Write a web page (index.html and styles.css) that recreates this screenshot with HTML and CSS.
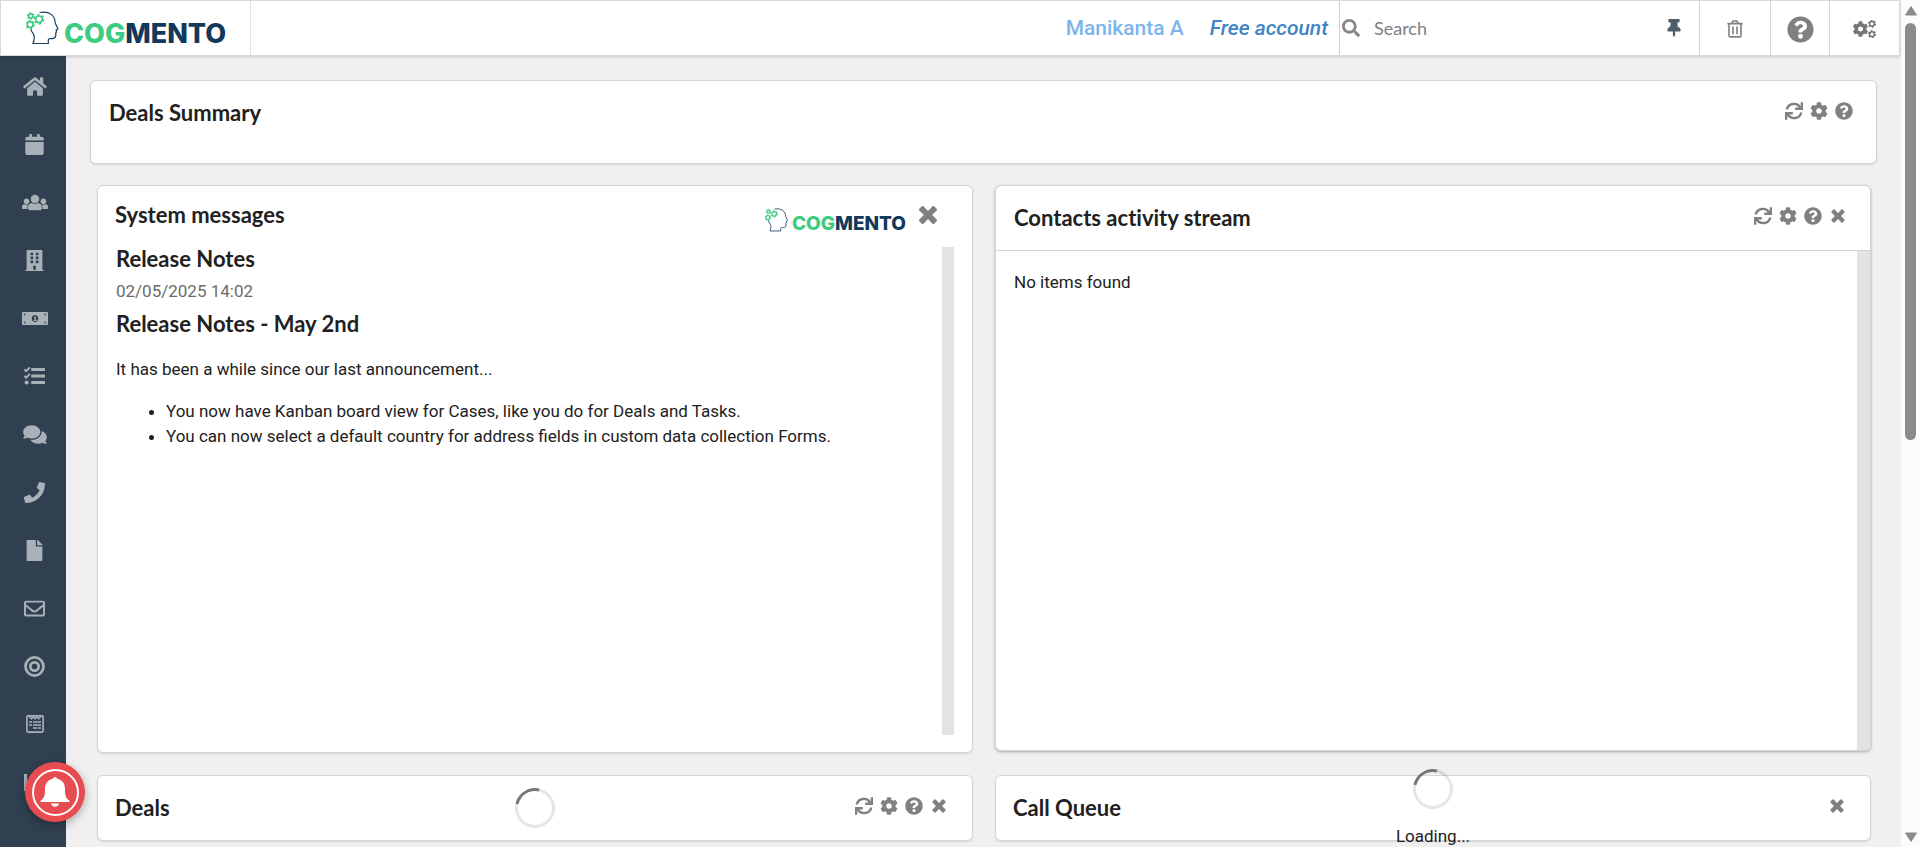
FILE: index.html
```html
<!DOCTYPE html>
<html lang="en">
<head>
<meta charset="utf-8">
<title>Cogmento CRM</title>
<link rel="stylesheet" href="styles.css">
</head>
<body>
<svg class="sprite" aria-hidden="true">
  <symbol id="home" viewBox="0 0 576 512"><path d="M280.37 148.26L96 300.11V464a16 16 0 0 0 16 16l112.06-.29a16 16 0 0 0 15.92-16V368a16 16 0 0 1 16-16h64a16 16 0 0 1 16 16v95.64a16 16 0 0 0 16 16.05L464 480a16 16 0 0 0 16-16V300L295.67 148.26a12.19 12.19 0 0 0-15.3 0zM571.6 251.47L488 182.56V44.05a12 12 0 0 0-12-12h-56a12 12 0 0 0-12 12v72.61L318.47 43a48 48 0 0 0-61 0L4.34 251.47a12 12 0 0 0-1.6 16.9l25.5 31A12 12 0 0 0 45.15 301l235.22-193.74a12.19 12.19 0 0 1 15.3 0L530.9 301a12 12 0 0 0 16.9-1.6l25.5-31a12 12 0 0 0-1.7-16.93z"/></symbol>
  <symbol id="calendar" viewBox="0 0 448 512"><path d="M12 192h424c6.600 0 12 5.400 12 12v260c0 26.500-21.500 48-48 48H48c-26.500 0-48-21.500-48-48V204c0-6.600 5.400-12 12-12zm436-44v-36c0-26.500-21.500-48-48-48h-48V12c0-6.600-5.400-12-12-12h-40c-6.600 0-12 5.400-12 12v52H160V12c0-6.600-5.400-12-12-12h-40c-6.600 0-12 5.400-12 12v52H48C21.500 64 0 85.500 0 112v36c0 6.600 5.400 12 12 12h424c6.600 0 12-5.400 12-12z"/></symbol>
  <symbol id="users" viewBox="0 0 640 512"><path d="M320 64c57.99 0 105 47.01 105 105s-47.01 105-105 105-105-47.01-105-105S262.01 64 320 64zm113.463 217.366l-39.982-9.996c-49.168 35.365-108.766 27.473-146.961 0l-39.982 9.996C174.485 289.379 152 318.177 152 351.216V412c0 19.882 16.118 36 36 36h264c19.882 0 36-16.118 36-36v-60.784c0-33.039-22.485-61.837-54.537-69.85zM528 300c38.66 0 70-31.34 70-70s-31.34-70-70-70-70 31.34-70 70 31.34 70 70 70zm-416 0c38.66 0 70-31.34 70-70s-31.34-70-70-70-70 31.34-70 70 31.34 70 70 70zm24 112v-60.784c0-16.551 4.593-32.204 12.703-45.599-29.988 14.72-63.336 8.708-85.69-7.37l-26.655 6.664C14.99 310.252 0 329.452 0 351.477V392c0 13.255 10.745 24 24 24h112.169a52.417 52.417 0 0 1-.169-4zm467.642-107.09l-26.655-6.664c-27.925 20.086-60.89 19.233-85.786 7.218C499.369 318.893 504 334.601 504 351.216V412c0 1.347-.068 2.678-.169 4H616c13.255 0 24-10.745 24-24v-40.523c0-22.025-14.99-41.225-36.358-46.567z"/></symbol>
  <symbol id="building" viewBox="0 0 448 512"><path fill-rule="evenodd" d="M436 480h-20V24c0-13.255-10.745-24-24-24H56C42.745 0 32 10.745 32 24v456H12c-6.627 0-12 5.373-12 12v20h448v-20c0-6.627-5.373-12-12-12zM128 64h64v64h-64zM256 64h64v64h-64zM128 160h64v64h-64zM256 160h64v64h-64zM128 256h64v64h-64zM256 256h64v64h-64zM192 384h64v96h-64z"/></symbol>
  <symbol id="money" viewBox="0 0 640 512"><path fill-rule="evenodd" d="M24 96h592a24 24 0 0 1 24 24v272a24 24 0 0 1-24 24H24a24 24 0 0 1-24-24V120a24 24 0 0 1 24-24zM48 140v44a44 44 0 0 0 44-44zM592 140h-44a44 44 0 0 0 44 44zM48 372h44a44 44 0 0 0-44-44zM592 372v-44a44 44 0 0 0-44 44zM320 172c-46 0-80 38-80 84s34 84 80 84 80-38 80-84-34-84-80-84zM296 206h44v88h20v22h-70v-22h18v-60h-16z"/></symbol>
  <symbol id="tasks" viewBox="0 0 512 512"><path d="M190 50h308a14 14 0 0 1 14 14v46a14 14 0 0 1-14 14H190a14 14 0 0 1-14-14V64a14 14 0 0 1 14-14zM190 208h308a14 14 0 0 1 14 14v44a14 14 0 0 1-14 14H190a14 14 0 0 1-14-14v-44a14 14 0 0 1 14-14zM190 366h308a14 14 0 0 1 14 14v44a14 14 0 0 1-14 14H190a14 14 0 0 1-14-14v-44a14 14 0 0 1 14-14z"/><circle cx="64" cy="402" r="50"/><path d="M8 82l46 44L142 34M8 240l46 44L142 192" fill="none" stroke="currentColor" stroke-width="48"/></symbol>
  <symbol id="comments" viewBox="0 0 576 512"><path d="M416 192c0-88.400-93.100-160-208-160S0 103.600 0 192c0 34.300 14.100 65.900 38 92-13.400 30.200-35.500 54.200-35.800 54.500-2.200 2.300-2.800 5.700-1.500 8.700S4.800 352 8 352c36.600 0 66.900-12.300 88.700-25 32.200 15.700 70.300 25 111.300 25 114.900 0 208-71.600 208-160zm122 220c23.900-26 38-57.700 38-92 0-66.900-53.500-124.200-129.300-148.100.9 6.600 1.300 13.300 1.300 20.100 0 105.900-107.700 192-240 192-10.800 0-21.300-.8-31.700-1.900C207.800 439.600 281.800 480 368 480c41 0 79.100-9.200 111.300-25 21.800 12.700 52.100 25 88.700 25 3.200 0 6.100-1.900 7.300-4.800 1.300-2.900.7-6.300-1.500-8.700-.3-.3-22.400-24.200-35.800-54.500z"/></symbol>
  <symbol id="phone" viewBox="0 0 512 512"><path d="M493.400 24.600l-104-24c-11.300-2.600-22.900 3.300-27.500 13.900l-48 112c-4.200 9.800-1.400 21.300 6.900 28l60.600 49.600c-36 76.700-98.900 140.500-177.200 177.200l-49.600-60.600c-6.800-8.300-18.200-11.100-28-6.900l-112 48C3.900 366.500-2 378.100.6 389.400l24 104C27.100 504.200 36.700 512 48 512c256.100 0 464-207.500 464-464 0-11.200-7.700-20.900-18.600-23.400z"/></symbol>
  <symbol id="file" viewBox="0 0 384 512"><path d="M224 136V0H24C10.700 0 0 10.700 0 24v464c0 13.300 10.700 24 24 24h336c13.300 0 24-10.700 24-24V160H248c-13.200 0-24-10.800-24-24zm160-14.100v6.100H256V0h6.100c6.400 0 12.500 2.500 17 7l97.900 98c4.500 4.500 7 10.600 7 16.900z"/></symbol>
  <symbol id="mail" viewBox="0 0 512 512"><path d="M464 64H48C21.490 64 0 85.490 0 112v288c0 26.510 21.490 48 48 48h416c26.510 0 48-21.490 48-48V112c0-26.510-21.490-48-48-48zm0 48v40.805c-22.422 18.259-58.168 46.651-134.587 106.490-16.841 13.247-50.201 45.072-73.413 44.701-23.208.375-56.579-31.459-73.413-44.701C106.180 199.465 70.425 171.067 48 152.805V112h416zM48 400V214.398c22.914 18.251 55.409 43.862 104.938 82.646 21.857 17.205 60.134 55.186 103.062 54.955 42.717.231 80.509-37.199 103.053-54.947 49.528-38.783 82.032-64.401 104.947-82.653V400H48z"/></symbol>
  <symbol id="target" viewBox="0 0 20 20"><g fill="none" stroke="currentColor"><circle cx="10" cy="10" r="8.600" stroke-width="2.600"/><circle cx="10" cy="10" r="4" stroke-width="2.600"/></g></symbol>
  <symbol id="form" viewBox="0 0 18 18"><g fill="none" stroke="currentColor"><rect x=".9" y=".9" width="16.200" height="16.200" rx="1" stroke-width="1.600"/><path d="M3 1.500l2.400 2.300L7.200 2 9 3.800 10.800 2l1.800 1.800L15 1.500" stroke-width="1.400"/><path d="M3 7h3M7 7h8M3 10h3M7 10h8M7 13h4M12 13h3" stroke-width="1.700"/></g></symbol>
  <symbol id="chart" viewBox="0 0 20 16"><path d="M0 0h3v13h17v3H0zM6 7h3v4H6zM10 3h3v8h-3zM14 5h3v6h-3z"/></symbol>
  <symbol id="search" viewBox="0 0 512 512"><path d="M505 442.700L405.300 343c-4.500-4.500-10.600-7-17-7H372c27.600-35.300 44-79.700 44-128C416 93.100 322.900 0 208 0S0 93.100 0 208s93.100 208 208 208c48.300 0 92.700-16.400 128-44v16.300c0 6.400 2.500 12.500 7 17l99.700 99.700c9.400 9.400 24.600 9.400 33.900 0l28.300-28.300c9.400-9.400 9.400-24.600.1-34zM208 336c-70.700 0-128-57.200-128-128 0-70.700 57.200-128 128-128 70.700 0 128 57.200 128 128 0 70.700-57.200 128-128 128z"/></symbol>
  <symbol id="pin" viewBox="0 0 384 512"><path d="M298.028 214.267L285.793 96H328c13.255 0 24-10.745 24-24V24c0-13.255-10.745-24-24-24H56C42.745 0 32 10.745 32 24v48c0 13.255 10.745 24 24 24h42.207L85.972 214.267C37.465 236.820 0 277.261 0 328c0 13.255 10.745 24 24 24h136v104.007c0 1.242.289 2.467.845 3.578l24 48c2.941 5.882 11.364 5.893 14.311 0l24-48a8.008 8.008 0 0 0 .845-3.578V352h136c13.255 0 24-10.745 24-24-.001-51.183-37.983-91.420-85.973-113.733z"/></symbol>
  <symbol id="trash" viewBox="0 0 16 18"><path d="M.4 3.600h15.200M4.800 3.400L6 1h4l1.200 2.400M2 4v11.700a1.200 1.200 0 0 0 1.200 1.200h9.600a1.200 1.200 0 0 0 1.200-1.200V4M6 6.500v7.700M10 6.500v7.700" fill="none" stroke="currentColor" stroke-width="1.600"/></symbol>
  <symbol id="help" viewBox="0 0 512 512"><path d="M504 256c0 136.997-111.043 248-248 248S8 392.997 8 256C8 119.083 119.043 8 256 8s248 111.083 248 248zM262.655 90c-54.497 0-89.255 22.957-116.549 63.758-3.536 5.286-2.353 12.415 2.715 16.258l34.699 26.310c5.205 3.947 12.621 3.008 16.665-2.122 17.864-22.658 30.113-35.797 57.303-35.797 20.429 0 45.698 13.148 45.698 32.958 0 14.976-12.363 22.667-32.534 33.976C247.128 238.528 216 254.941 216 296v4c0 6.627 5.373 12 12 12h56c6.627 0 12-5.373 12-12v-1.333c0-28.462 83.186-29.647 83.186-106.667 0-58.002-60.165-102-116.531-102zM256 338c-25.365 0-46 20.635-46 46 0 25.364 20.635 46 46 46s46-20.636 46-46c0-25.365-20.635-46-46-46z"/></symbol>
  <symbol id="cog" viewBox="0 0 512 512"><path d="M487.400 315.700l-42.600-24.600c4.300-23.200 4.300-47 0-70.200l42.600-24.600c4.900-2.800 7.100-8.600 5.500-14-11.100-35.600-30-67.800-54.700-94.600-3.800-4.100-10-5.100-14.800-2.300L380.800 110c-17.900-15.400-38.500-27.300-60.800-35.100V25.800c0-5.600-3.900-10.500-9.400-11.700-36.700-8.200-74.300-7.800-109.200 0-5.500 1.200-9.400 6.100-9.400 11.700V75c-22.200 7.900-42.800 19.800-60.800 35.100L88.700 85.500c-4.900-2.800-11-1.900-14.800 2.300-24.700 26.700-43.600 58.900-54.700 94.600-1.700 5.400.6 11.200 5.500 14L67.300 221c-4.300 23.200-4.300 47 0 70.200l-42.600 24.600c-4.900 2.800-7.100 8.600-5.500 14 11.100 35.600 30 67.800 54.700 94.600 3.800 4.100 10 5.100 14.800 2.300l42.600-24.600c17.900 15.400 38.500 27.300 60.800 35.100v49.200c0 5.600 3.900 10.500 9.400 11.700 36.700 8.200 74.300 7.800 109.200 0 5.500-1.200 9.400-6.100 9.400-11.700v-49.200c22.200-7.900 42.800-19.800 60.800-35.100l42.600 24.600c4.900 2.800 11 1.900 14.800-2.300 24.700-26.700 43.600-58.900 54.700-94.600 1.500-5.500-.7-11.300-5.600-14.100zM256 336c-44.100 0-80-35.900-80-80s35.900-80 80-80 80 35.900 80 80-35.900 80-80 80z"/></symbol>
  <symbol id="cogs" viewBox="0 0 23 18"><use href="#cog" x="-.5" y="1" width="16" height="16"/><g fill="none" stroke="currentColor"><circle cx="19" cy="3.800" r="2.400" stroke-width="1.500"/><circle cx="19" cy="3.800" r="3.500" stroke-width="1.200" stroke-dasharray="1.800 1.870"/><circle cx="19" cy="14.200" r="2.400" stroke-width="1.500"/><circle cx="19" cy="14.200" r="3.500" stroke-width="1.200" stroke-dasharray="1.800 1.870"/></g></symbol>
  <symbol id="sync" viewBox="0 0 18 18"><path d="M1.700 7.600A7.400 7.400 0 0 1 15.200 5.400M16.300 10.400A7.400 7.400 0 0 1 2.800 12.600" fill="none" stroke="currentColor" stroke-width="2.400"/><path d="M15.700.2H18v7.800h-7.800V5.600h3.200l2.300-1.200zM2.300 17.800H0V10h7.800v2.400H4.600l-2.300 1.200z"/></symbol>
  <symbol id="times" viewBox="0 0 384 512"><path d="M323.100 441l53.900-53.900c9.400-9.400 9.400-24.500 0-33.900L279.800 256l97.200-97.200c9.400-9.400 9.400-24.500 0-33.900L323.100 71c-9.400-9.400-24.500-9.400-33.900 0L192 168.200 94.800 71c-9.400-9.400-24.500-9.400-33.900 0L7 124.900c-9.400 9.400-9.400 24.500 0 33.900l97.200 97.200L7 353.200c-9.400 9.400-9.400 24.500 0 33.900L60.900 441c9.400 9.400 24.500 9.400 33.900 0l97.200-97.200 97.200 97.200c9.300 9.300 24.500 9.300 33.900 0z"/></symbol>
  <symbol id="head" viewBox="0 0 34 34"><path d="M13.500 1.500C24 0 29 4.500 29.200 12l2.500 5.300c.3.800-.2 1.300-1.500 1.600l.3 2.200-.9 1 .3 1.300c-.2 3.500-1.500 4.200-4 4.200-2 0-3.600-.3-3.600 1.300V32.500H7c2-5 1.700-7 .5-9.500C5 20 4.800 19 4.800 17.500" fill="none" stroke="#1c3f5f" stroke-width="1.200"/><g fill="none" stroke="#3fcb80"><g stroke-width="1.700"><circle cx="4.700" cy="5" r="2.100"/><circle cx="13" cy="8.300" r="3.300"/><circle cx="4.100" cy="13.600" r="2.900"/></g><circle cx="4.700" cy="5" r="3.300" stroke-width="1.200" stroke-dasharray="1.700 1.760"/><circle cx="13" cy="8.300" r="4.700" stroke-width="1.400" stroke-dasharray="2.400 2.520"/><circle cx="4.100" cy="13.600" r="4.100" stroke-width="1.200" stroke-dasharray="2.100 2.190"/></g></symbol>
  <symbol id="bell" viewBox="0 0 30 30"><path d="M15 0a2 2 0 0 1 2 1.800c5.300 1 8 4.800 8 10.200 0 6.500.8 9 4 11.300.8.700.7 1.700-.2 1.700H1.200c-.9 0-1-1-.2-1.700C4.200 21 5 18.500 5 12 5 6.600 7.700 2.800 13 1.800A2 2 0 0 1 15 0zM11 26.600h8c-.3 2-1.800 3.200-4 3.200s-3.700-1.200-4-3.200z"/></symbol>
</svg>

<div class="window">
  <div class="app">
    <header class="topbar">
      <a class="brand" href="#" aria-label="Cogmento home">
        <svg class="brand-mark"><use href="#head"/></svg>
        <span class="brand-name"><span class="brand-cog">COG</span>MENTO</span>
      </a>
      <div class="account">
        <span class="user-name">Manikanta A</span>
        <a class="plan" href="#">Free account</a>
      </div>
      <form class="search">
        <svg class="search-icon"><use href="#search"/></svg>
        <input class="search-input" type="text" placeholder="Search" aria-label="Search">
        <button class="icon-btn pin" type="button" aria-label="Pin"><svg><use href="#pin"/></svg></button>
      </form>
      <button class="top-btn top-trash" type="button" aria-label="Trash"><svg><use href="#trash"/></svg></button>
      <button class="top-btn top-help" type="button" aria-label="Help"><svg><use href="#help"/></svg></button>
      <button class="top-btn top-cogs" type="button" aria-label="Settings"><svg><use href="#cogs"/></svg></button>
    </header>

    <div class="body">
      <nav class="sidebar" aria-label="Main">
        <a class="nav-item" href="#" aria-label="Home"><svg class="i24"><use href="#home"/></svg></a>
        <a class="nav-item" href="#" aria-label="Calendar"><svg><use href="#calendar"/></svg></a>
        <a class="nav-item" href="#" aria-label="Contacts"><svg class="i26"><use href="#users"/></svg></a>
        <a class="nav-item" href="#" aria-label="Companies"><svg><use href="#building"/></svg></a>
        <a class="nav-item" href="#" aria-label="Deals"><svg class="i26"><use href="#money"/></svg></a>
        <a class="nav-item" href="#" aria-label="Tasks"><svg><use href="#tasks"/></svg></a>
        <a class="nav-item" href="#" aria-label="Cases"><svg class="i24"><use href="#comments"/></svg></a>
        <a class="nav-item" href="#" aria-label="Calls"><svg><use href="#phone"/></svg></a>
        <a class="nav-item" href="#" aria-label="Documents"><svg><use href="#file"/></svg></a>
        <a class="nav-item" href="#" aria-label="Email"><svg><use href="#mail"/></svg></a>
        <a class="nav-item" href="#" aria-label="Campaigns"><svg><use href="#target"/></svg></a>
        <a class="nav-item" href="#" aria-label="Forms"><svg class="i18"><use href="#form"/></svg></a>
        <a class="nav-item" href="#" aria-label="Reports"><svg><use href="#chart"/></svg></a>
      </nav>

      <main class="main">
        <section class="card summary">
          <h2 class="title">Deals Summary</h2>
          <div class="tools">
            <button class="icon-btn" type="button" aria-label="Refresh"><svg><use href="#sync"/></svg></button>
            <button class="icon-btn" type="button" aria-label="Settings"><svg><use href="#cog"/></svg></button>
            <button class="icon-btn" type="button" aria-label="Help"><svg><use href="#help"/></svg></button>
          </div>
        </section>

        <div class="widgets">
          <section class="card messages">
            <div class="messages-head">
              <h2 class="title">System messages</h2>
              <div class="brand-small">
                <svg class="brand-mark"><use href="#head"/></svg>
                <span class="brand-name"><span class="brand-cog">COG</span>MENTO</span>
              </div>
              <button class="icon-btn close-large" type="button" aria-label="Close"><svg><use href="#times"/></svg></button>
            </div>
            <div class="messages-body">
              <article class="note">
                <h3 class="title">Release Notes</h3>
                <time class="date">02/05/2025 14:02</time>
                <h3 class="title">Release Notes - May 2nd</h3>
                <p class="intro">It has been a while since our last announcement...</p>
                <ul class="list">
                  <li>You now have Kanban board view for Cases, like you do for Deals and Tasks.</li>
                  <li>You can now select a default country for address fields in custom data collection Forms.</li>
                </ul>
              </article>
              <div class="track"></div>
            </div>
          </section>

          <section class="card stream">
            <div class="card-head">
              <h2 class="title">Contacts activity stream</h2>
              <div class="tools">
                <button class="icon-btn" type="button" aria-label="Refresh"><svg><use href="#sync"/></svg></button>
                <button class="icon-btn" type="button" aria-label="Settings"><svg><use href="#cog"/></svg></button>
                <button class="icon-btn" type="button" aria-label="Help"><svg><use href="#help"/></svg></button>
                <button class="icon-btn" type="button" aria-label="Close"><svg><use href="#times"/></svg></button>
              </div>
            </div>
            <div class="stream-body">
              <p class="empty">No items found</p>
              <div class="track"></div>
            </div>
          </section>

          <section class="card card-head">
            <h2 class="title">Deals</h2>
            <div class="loader loader-deals"><div class="spinner"></div></div>
            <div class="tools">
              <button class="icon-btn" type="button" aria-label="Refresh"><svg><use href="#sync"/></svg></button>
              <button class="icon-btn" type="button" aria-label="Settings"><svg><use href="#cog"/></svg></button>
              <button class="icon-btn" type="button" aria-label="Help"><svg><use href="#help"/></svg></button>
              <button class="icon-btn" type="button" aria-label="Close"><svg><use href="#times"/></svg></button>
            </div>
          </section>

          <section class="card card-head">
            <h2 class="title">Call Queue</h2>
            <div class="loader loader-queue"><div class="spinner"></div><span>Loading...</span></div>
            <div class="tools">
              <button class="icon-btn" type="button" aria-label="Close"><svg><use href="#times"/></svg></button>
            </div>
          </section>
        </div>
      </main>
    </div>
  </div>

  <div class="scrollbar" aria-hidden="true">
    <svg class="arrow" viewBox="0 0 12 10"><path d="M6 .5L11.500 9H.5z" stroke-linejoin="round" stroke="currentColor"/></svg>
    <div class="rail"><div class="thumb"></div></div>
    <svg class="arrow" viewBox="0 0 12 10"><path d="M6 9.500L.5 1h11z" stroke-linejoin="round" stroke="currentColor"/></svg>
  </div>
</div>

<button class="notify" type="button" aria-label="Notifications"><span class="notify-ring"><svg><use href="#bell"/></svg></span></button>
</body>
</html>
```
FILE: styles.css
```css
* { box-sizing: border-box; }

body {
  margin: 0;
  background: #f0f0f0;
  color: #212121;
  font: 17px/25px Roboto, "Liberation Sans", sans-serif;
  overflow: hidden;
}

h2, h3, p, ul { margin: 0; }
a { text-decoration: none; }

button {
  margin: 0;
  padding: 0;
  border: 0;
  background: none;
  color: #808080;
  cursor: pointer;
}

svg { display: block; fill: currentColor; }
.sprite { position: absolute; width: 0; height: 0; }

.window { display: flex; height: 100vh; }
.app { flex: 1; min-width: 0; display: flex; flex-direction: column; }

/* Top bar */
.topbar {
  position: relative;
  z-index: 1;
  display: flex;
  flex: none;
  height: 56px;
  margin-right: 1px;
  background: #fff;
  border: 1px solid #d9d9d9;
  box-shadow: 0 1px 3px rgba(0, 0, 0, .16);
}

.brand {
  display: flex;
  align-items: center;
  width: 250px;
  padding-left: 25px;
  border-right: 1px solid #e0e0e0;
}

.brand-mark { width: 34px; height: 34px; }

.brand-name {
  margin: 12px 0 0 4px;
  font: 800 27px/32px Inter, "Liberation Sans", sans-serif;
  color: #12385a;
}

.brand-cog { color: #3fcb80; }

.account {
  flex: 1;
  display: flex;
  align-items: center;
  justify-content: flex-end;
  gap: 26px;
  padding-right: 11px;
  font-size: 21px;
  font-weight: 500;
}

.user-name { color: #7cb5ec; }
.plan { font-style: italic; color: #4183c4; }

.search {
  display: flex;
  align-items: center;
  width: 360px;
  padding: 0 16px 0 2px;
  border-left: 1px solid #d0d0d0;
}

.search-icon { width: 18px; height: 18px; color: #888; }

.search-input {
  flex: 1;
  min-width: 0;
  margin-left: 14px;
  padding: 0;
  border: 0;
  outline: 0;
  background: none;
  font: 18px/24px Lato, sans-serif;
  color: #333;
}

.search-input::placeholder { color: #808080; opacity: 1; }
.pin { color: #4f5d6b; }
.pin svg { width: 14px; height: 18px; }

.top-btn {
  display: flex;
  align-items: center;
  justify-content: center;
  padding-top: 2px;
  border-left: 1px solid #d4d4d4;
}

.top-trash { width: 71px; }
.top-trash svg { width: 16px; height: 18px; }
.top-help { width: 59px; }
.top-help svg { width: 27px; height: 27px; }
.top-cogs { width: 70px; color: #757575; }
.top-cogs svg { width: 23px; height: 18px; }

/* Sidebar */
.body { flex: 1; min-height: 0; display: flex; }

.sidebar {
  flex: none;
  width: 66px;
  padding-top: 1px;
  overflow: hidden;
  background: #304050;
}

.nav-item {
  display: flex;
  align-items: center;
  justify-content: center;
  height: 58px;
  padding-left: 3px;
  color: #a9b1b8;
}

.nav-item svg { width: 21px; height: 21px; }
.nav-item .i24 { width: 24px; }
.nav-item .i26 { width: 26px; }
.nav-item .i18 { width: 18px; height: 18px; }

/* Dashboard */
.main { flex: 1; min-width: 0; overflow: hidden; padding: 24px 24px 0; }

.card {
  position: relative;
  min-width: 0;
  background: #fff;
  border: 1px solid #d4d4d5;
  border-radius: 6px;
  box-shadow: 0 1px 2px rgba(34, 36, 38, .12);
}

.title {
  font: 700 22px/30px Lato, sans-serif;
  font-variant-ligatures: none;
}

.summary {
  display: flex;
  align-items: flex-start;
  justify-content: space-between;
  min-height: 84px;
  padding: 17px 23px 17px 18px;
}

.tools { display: flex; gap: 7px; padding-top: 4px; }
.icon-btn svg { width: 18px; height: 18px; }

.widgets {
  display: grid;
  grid-template-columns: 1fr 1fr;
  align-items: start;
  gap: 22px;
  padding: 21px 6px 0 7px;
}

.messages { padding: 14px 18px 17px 17px; }
.messages-head { display: flex; align-items: flex-start; padding-right: 17px; }
.messages-head .title { flex: 1; }

.brand-small { display: flex; align-items: flex-start; margin-top: 8px; }
.brand-small .brand-mark { width: 24px; height: 24px; }
.brand-small .brand-name { margin: 4px 13px 0 3px; font-size: 19px; line-height: 24px; }

.close-large svg { width: 18px; height: 30px; }

.messages-body {
  display: flex;
  justify-content: space-between;
  height: 488px;
  margin-top: 11px;
}

.note { padding-left: 1px; flex: 1; }
.note .title { line-height: 24px; }
.date { display: block; padding: 7px 0 8px; line-height: 26px; color: #6b6b6b; }
.note .intro { padding: 21px 0 17px; }
.list { padding-left: 50px; }
.track { flex: none; width: 12px; background: #e3e3e3; }

.card-head {
  display: flex;
  align-items: flex-start;
  justify-content: space-between;
  min-height: 66px;
  padding: 17px 24px 17px 17px;
}

.stream .card-head {
  min-height: 65px;
  padding-left: 18px;
  padding-right: 23px;
  border-bottom: 1px solid #d4d4d5;
}

.stream { box-shadow: 0 1px 3px rgba(34, 36, 38, .35); }
.stream-body { display: flex; justify-content: space-between; height: 499px; }
.stream-body .track { width: 13px; border-radius: 0 0 5px 0; }
.empty { padding: 19px 18px; }

.loader {
  position: absolute;
  left: 50%;
  transform: translateX(-50%);
  display: flex;
  flex-direction: column;
  align-items: center;
  gap: 15px;
}

.loader-deals { top: 12px; }
.loader-queue { top: -7px; }

.spinner {
  width: 40px;
  height: 40px;
  border: 3px solid rgba(0, 0, 0, .1);
  border-top-color: #767676;
  border-radius: 50%;
  transform: rotate(-32deg);
}

/* Page scrollbar */
.scrollbar {
  flex: none;
  display: flex;
  flex-direction: column;
  align-items: center;
  width: 19px;
  padding: 6px 0 5px 0;
  background: #fcfcfc;
  color: #8b8b8b;
}

.arrow { width: 12px; height: 10px; }
.rail { flex: 1; width: 11px; padding: 7px 0; }
.thumb { height: 52%; border-radius: 6px; background: #8b8b8b; }

/* Floating notification button */
.notify {
  position: fixed;
  z-index: 2;
  left: 25px;
  bottom: 25px;
  display: flex;
  align-items: center;
  justify-content: center;
  width: 60px;
  height: 60px;
  border-radius: 50%;
  background: #e64c50;
  color: #fff;
  box-shadow: 0 3px 10px rgba(0, 0, 0, .3);
}

.notify-ring {
  display: flex;
  align-items: center;
  justify-content: center;
  width: 47px;
  height: 47px;
  border: 2px solid #fff;
  border-radius: 50%;
}

.notify svg { width: 30px; height: 30px; }
```
